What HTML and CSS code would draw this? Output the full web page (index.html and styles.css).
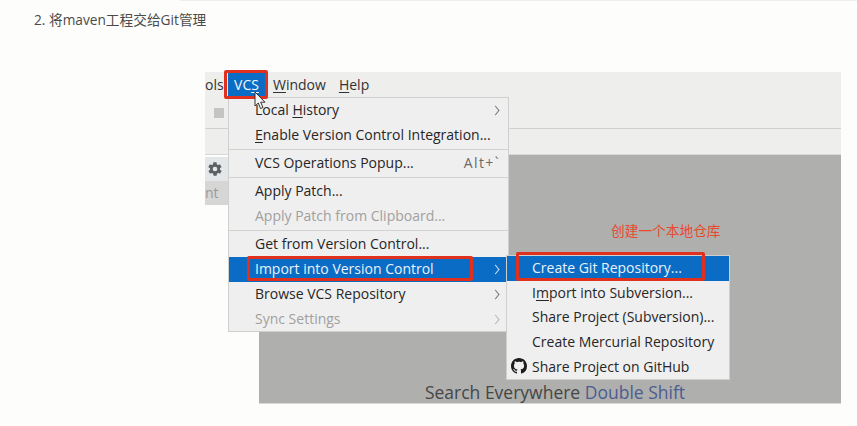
FILE: index.html
```html
<!DOCTYPE html>
<html lang="zh-CN">
<head>
  <meta charset="UTF-8">
  <meta name="viewport" content="width=device-width, initial-scale=1.0">
  <title>将maven工程交给Git管理</title>
  <link rel="stylesheet" href="styles.css">
</head>
<body>
  <div class="top-strip"></div>
  <p class="step">2. 将maven工程交给Git管理</p>

  <div class="shot">
    <div class="menubar">
      <span class="bar-item clipped">ols</span>
      <span class="bar-item active">VC<u>S</u></span>
      <span class="bar-item"><u>W</u>indow</span>
      <span class="bar-item"><u>H</u>elp</span>
    </div>
    <div class="toolbar"><span class="stop"></span></div>
    <div class="navbar"></div>
    <div class="workarea">
      <div class="side">
        <div class="gear-row">
          <svg class="gear" viewBox="0 0 24 24"><path d="M19.4 13c.1-.3.1-.7.1-1s0-.7-.1-1l2.1-1.6c.2-.2.2-.4.1-.6l-2-3.5c-.1-.2-.4-.3-.6-.2l-2.5 1c-.5-.4-1.100-.7-1.700-1l-.4-2.600c0-.3-.2-.5-.5-.5h-4c-.3 0-.5.2-.5.5l-.4 2.600c-.6.3-1.200.6-1.700 1l-2.500-1c-.2-.1-.5 0-.6.2l-2 3.500c-.1.200-.1.500.1.600L4.600 11c-.1.300-.1.700-.1 1s0 .7.1 1l-2.100 1.600c-.2.200-.2.400-.1.600l2 3.500c.1.200.4.300.6.200l2.500-1c.5.400 1.100.7 1.700 1l.4 2.600c0 .3.2.5.5.5h4c.3 0 .5-.2.5-.5l.4-2.600c.6-.3 1.200-.6 1.700-1l2.500 1c.2.100.5 0 .6-.2l2-3.500c.1-.2.1-.4-.1-.6L19.400 13zM12 15.500a3.500 3.500 0 1 1 0-7 3.500 3.500 0 0 1 0 7z"/></svg>
        </div>
        <div class="tab-row">nt</div>
      </div>
      <div class="editor">
        <p class="hint">Search Everywhere <span class="shortcut">Double Shift</span></p>
      </div>
    </div>
  </div>

  <div class="menu vcs-menu">
    <div class="item"><span>Local <u>H</u>istory</span><i class="arrow"></i></div>
    <div class="item"><span><u>E</u>nable Version Control Integration...</span></div>
    <div class="sep"></div>
    <div class="item"><span>VCS Operations Popup...</span><span class="keys">Alt+`</span></div>
    <div class="sep"></div>
    <div class="item"><span>Apply Patch...</span></div>
    <div class="item off"><span>Apply Patch from Clipboard...</span></div>
    <div class="sep"></div>
    <div class="item"><span>Get from Version Control...</span></div>
    <div class="item on"><span>Import into Version Control</span><i class="arrow"></i></div>
    <div class="item"><span>Browse VCS Repository</span><i class="arrow"></i></div>
    <div class="item off"><span>Sync Settings</span><i class="arrow"></i></div>
  </div>

  <div class="menu sub-menu">
    <div class="item on"><span>Create Git Repository...</span></div>
    <div class="item"><span>I<u>m</u>port into Subversion...</span></div>
    <div class="item"><span>Share Project (Subversion)...</span></div>
    <div class="item"><span>Create Mercurial Repository</span></div>
    <div class="item">
      <svg class="github" viewBox="0 0 16 16"><path d="M8 0C3.580 0 0 3.580 0 8c0 3.540 2.290 6.530 5.470 7.590.4.070.55-.17.55-.38 0-.19-.01-.82-.01-1.490-2.010.37-2.530-.49-2.690-.94-.09-.23-.48-.94-.82-1.130-.28-.15-.68-.52-.01-.53.63-.01 1.080.58 1.230.82.72 1.210 1.870.87 2.330.66.070-.52.28-.87.51-1.070-1.780-.2-3.640-.89-3.640-3.950 0-.87.31-1.590.82-2.150-.08-.2-.36-1.020.08-2.120 0 0 .67-.21 2.200.82.64-.18 1.320-.27 2-.27s1.360.09 2 .27c1.530-1.040 2.200-.82 2.200-.82.44 1.100.16 1.920.08 2.120.51.56.82 1.270.82 2.150 0 3.070-1.870 3.750-3.650 3.950.29.25.54.73.54 1.480 0 1.070-.01 1.930-.01 2.200 0 .21.15.46.55.38A8.010 8.010 0 0 0 16 8c0-4.420-3.580-8-8-8z"/></svg>
      <span>Share Project on GitHub</span>
    </div>
  </div>

  <p class="note">创建一个本地仓库</p>
  <div class="mark mark-vcs"></div>
  <div class="mark mark-import"></div>
  <div class="mark mark-create"></div>

  <svg class="cursor" viewBox="0 0 12 19"><path d="M1 1v14l3.300-3 2.200 5.500 2.500-1-2.300-5.300H11z"/></svg>
</body>
</html>
```

FILE: styles.css
```css
body {
  margin: 0;
  height: 426px;
  overflow: hidden;
  position: relative;
  background-color: #fdfdfb;
  font-family: "Open Sans", "Noto Sans CJK SC", sans-serif;
}

u {
  text-underline-offset: 2px;
}

.top-strip {
  height: 1px;
  margin-left: 180px;
  background-color: #eeeeee;
}

.step {
  margin: 11px 0 0 34px;
  height: 16px;
  font-size: 13.7px;
  line-height: 16px;
  color: #4a4a4a;
}

.shot {
  display: flex;
  flex-direction: column;
  width: 636px;
  height: 332px;
  margin: 44px 0 0 205px;
}

.menubar {
  display: flex;
  height: 25px;
  background-color: #eeeeed;
  font-size: 14px;
  line-height: 25px;
  color: #333333;
}

.bar-item {
  padding: 0 5px 0 8px;
  white-space: nowrap;
}

.bar-item.clipped {
  width: 17px;
  padding: 0;
  margin-right: 6px;
}

.bar-item.active {
  width: 37px;
  padding: 0;
  text-align: center;
  background-color: #0a6cc4;
  color: #f2f7fb;
}

.toolbar {
  display: flex;
  align-items: center;
  height: 31px;
  padding-left: 9px;
  background-color: #eeeeed;
  border-bottom: 1px solid #d0d0ce;
}

.stop {
  width: 10px;
  height: 10px;
  background-color: #c4c4c4;
}

.navbar {
  height: 25px;
  background-color: #eeeeed;
  border-bottom: 1px solid #d8d8d6;
}

.workarea {
  display: flex;
  flex: 1;
}

.side {
  width: 54px;
  padding-top: 2px;
}

.gear-row {
  display: flex;
  align-items: center;
  height: 24px;
  padding-left: 2px;
  background-color: #e4e7ea;
}

.gear {
  width: 16px;
  height: 16px;
  fill: #5c6063;
}

.tab-row {
  height: 24px;
  background-color: #d6d6d5;
  font-size: 14px;
  line-height: 24px;
  color: #9a9a9a;
}

.editor {
  flex: 1;
  display: flex;
  align-items: flex-end;
  justify-content: center;
  padding-left: 10px;
  background-color: #afafad;
  border-bottom: 1px solid #d8d8d6;
}

.hint {
  margin: 0 0 -1px 0;
  font-size: 17.5px;
  line-height: 24px;
  color: #464646;
}

.shortcut {
  color: #4c5c92;
}

.menu {
  position: absolute;
  box-sizing: border-box;
  background-color: #f0efef;
  border: 1px solid #cfcfcd;
  font-size: 14px;
  color: #262626;
}

.vcs-menu {
  left: 228px;
  top: 97px;
  width: 281px;
  height: 235px;
}

.sub-menu {
  left: 506px;
  top: 255px;
  width: 224px;
  height: 125px;
}

.item {
  display: flex;
  align-items: center;
  justify-content: space-between;
  box-sizing: border-box;
  height: 25px;
  padding: 0 8px 2px 26px;
  white-space: nowrap;
}

.sub-menu .item {
  justify-content: flex-start;
  height: 24.75px;
  padding-left: 25px;
}

.item.on {
  background-color: #0a6cc4;
  color: #eaf2fa;
}

.item.off {
  color: #a0a0a0;
}

.keys {
  letter-spacing: 1.4px;
  color: #6a6a6a;
}

.sep {
  height: 1px;
  margin: 1px 0;
  background-color: #d2d2d0;
}

.arrow {
  width: 7px;
  height: 7px;
  margin: 2px 1px 0 0;
  box-sizing: border-box;
  border-top: 1px solid #707070;
  border-right: 1px solid #707070;
  transform: scaleX(0.8) rotate(45deg);
}

.on .arrow {
  border-color: #dfeaf5;
}

.off .arrow {
  border-color: #b4b4b4;
}

.github {
  width: 16px;
  height: 16px;
  margin: 0 5px 0 -21px;
  fill: #1c1c1c;
}

.note {
  position: absolute;
  left: 611px;
  top: 222px;
  margin: 0;
  font-size: 13.7px;
  line-height: 18px;
  color: #e8492f;
}

.mark {
  position: absolute;
  box-sizing: border-box;
  border: 3px solid #e0301e;
  border-radius: 2px;
}

.mark-vcs {
  left: 224px;
  top: 70px;
  width: 44px;
  height: 29px;
}

.mark-import {
  left: 247px;
  top: 256px;
  width: 226px;
  height: 25px;
}

.mark-create {
  left: 516px;
  top: 252px;
  width: 189px;
  height: 29px;
}

.cursor {
  position: absolute;
  left: 254px;
  top: 91px;
  width: 12px;
  height: 19px;
  fill: #f4f4f4;
  stroke: #333333;
  stroke-width: 1;
}
```
